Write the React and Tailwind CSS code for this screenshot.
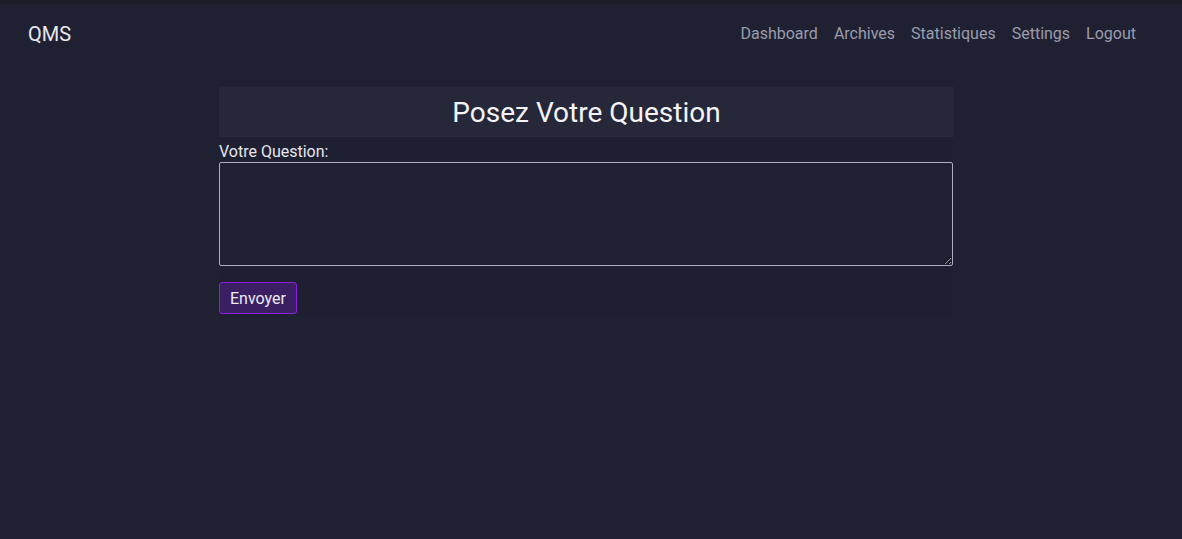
export default function App() {
	const links = [ 'Dashboard', 'Archives', 'Statistiques', 'Settings', 'Logout' ];

	return (
		<div className="min-h-[539px] bg-[#1f2133] text-white font-['Roboto',sans-serif] border-t-4 border-[#1c1d24]">
			<nav className="h-[58px] pt-[2px] flex items-center justify-between pl-[28px] pr-[46px]">
				<span className="text-[20px] text-[#e8e8ee]">QMS</span>
				<ul className="flex gap-[16px] text-[16px] text-[#9a9cab]">
					{ links.map( ( l ) => (
						<li key={ l }>{ l }</li>
					) ) }
				</ul>
			</nav>

			<main className="ml-[219px] w-[735px] mt-[25px] bg-[#1e1f31]">
				<h1 className="h-[50px] pt-[2px] flex items-center justify-center bg-[#262839] text-[28px] font-normal text-[#f4f4f8]">
					Posez Votre Question
				</h1>
				<form className="pb-[3px]" onSubmit={ ( e ) => e.preventDefault() }>
					<label className="block mt-[4px] pt-[1px] text-[16px] leading-[19px] text-[#e6e6ee]">Votre Question:</label>
					<textarea className="block w-[734px] h-[104px] mt-[1px] bg-[#1f2133] border border-[#adafc6] rounded-[2px]" />
					<button type="submit" className="mt-[16px] h-[32px] px-[10px] pt-[1px] text-[16px] text-[#ecebf4] bg-[#3a1f63] border border-[#8b1fe0] rounded-[3px]">
						Envoyer
					</button>
				</form>
			</main>
		</div>
	);
}
